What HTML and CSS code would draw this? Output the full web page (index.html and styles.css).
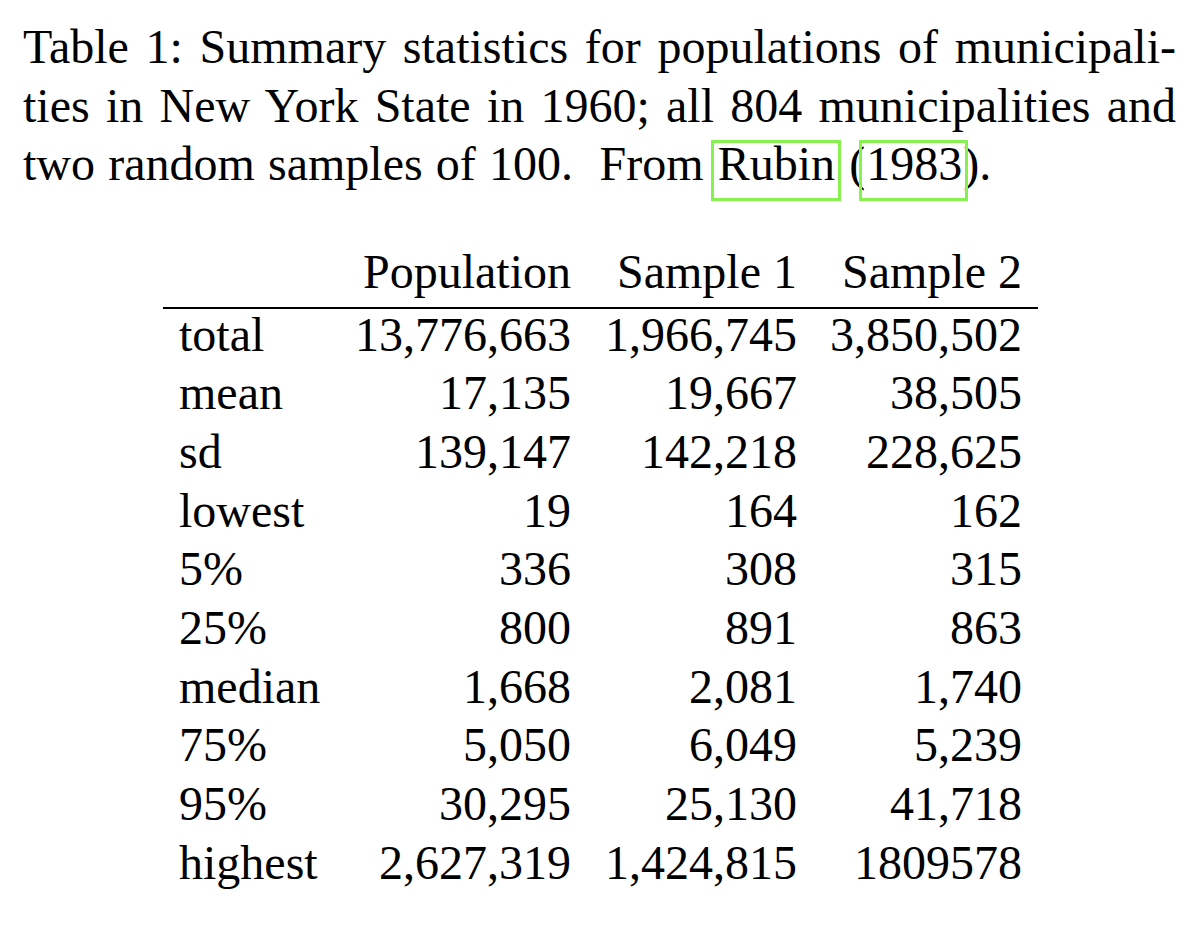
FILE: index.html
```html
<!DOCTYPE html>
<html>
<head>
<meta charset="utf-8">
<link rel="stylesheet" href="styles.css">
</head>
<body>
<div class="page">
  <p class="caption">
    <span class="line">Table 1: Summary statistics for populations of municipali-</span>
    <span class="line">ties in New York State in 1960; all 804 municipalities and</span>
    <span class="line last">two random samples of 100.&nbsp; From <span class="cite">Rubin</span> (<span class="cite">1983</span>).</span>
  </p>
  <table class="stats">
    <colgroup>
      <col class="c-label">
      <col class="c-pop">
      <col class="c-s1">
      <col class="c-s2">
    </colgroup>
    <thead>
      <tr><th></th><th>Population</th><th>Sample 1</th><th>Sample 2</th></tr>
    </thead>
    <tbody>
      <tr><td>total</td><td>13,776,663</td><td>1,966,745</td><td>3,850,502</td></tr>
      <tr><td>mean</td><td>17,135</td><td>19,667</td><td>38,505</td></tr>
      <tr><td>sd</td><td>139,147</td><td>142,218</td><td>228,625</td></tr>
      <tr><td>lowest</td><td>19</td><td>164</td><td>162</td></tr>
      <tr><td>5%</td><td>336</td><td>308</td><td>315</td></tr>
      <tr><td>25%</td><td>800</td><td>891</td><td>863</td></tr>
      <tr><td>median</td><td>1,668</td><td>2,081</td><td>1,740</td></tr>
      <tr><td>75%</td><td>5,050</td><td>6,049</td><td>5,239</td></tr>
      <tr><td>95%</td><td>30,295</td><td>25,130</td><td>41,718</td></tr>
      <tr><td>highest</td><td>2,627,319</td><td>1,424,815</td><td>1809578</td></tr>
    </tbody>
  </table>
</div>
</body>
</html>
```

FILE: styles.css
```css
html, body {
  margin: 0;
  padding: 0;
  background: #ffffff;
}

body {
  font-family: "Liberation Serif", "Times New Roman", serif;
  font-size: 48px;
  color: #000000;
}

.page {
  padding: 18px 0 0 23px;
}

.caption {
  margin: 0;
  width: 1153px;
  line-height: 58.5px;
}

.line {
  display: block;
  text-align: justify;
  text-align-last: justify;
  white-space: nowrap;
}

.line.last {
  text-align: left;
  text-align-last: left;
  word-spacing: 1.2px;
}

.cite {
  position: relative;
  margin: 0 1px;
}

.cite::after {
  content: "";
  position: absolute;
  left: -7px;
  right: -6px;
  top: 3px;
  bottom: -11px;
  border: 3px solid #86f24f;
  pointer-events: none;
}

.stats {
  margin: 52px 0 0 140px;
  border-collapse: collapse;
  table-layout: fixed;
  width: 875px;
  line-height: 50px;
}

.c-label { width: 176px; }
.c-pop { width: 248px; }
.c-s1 { width: 226px; }
.c-s2 { width: 225px; }

.stats th,
.stats td {
  padding: 1px 16px 7.7px;
  font-weight: normal;
  text-align: right;
  white-space: nowrap;
}

.stats th {
  padding-bottom: 10px;
  border-bottom: 2px solid #000000;
}

.stats td:first-child {
  text-align: left;
}
```
